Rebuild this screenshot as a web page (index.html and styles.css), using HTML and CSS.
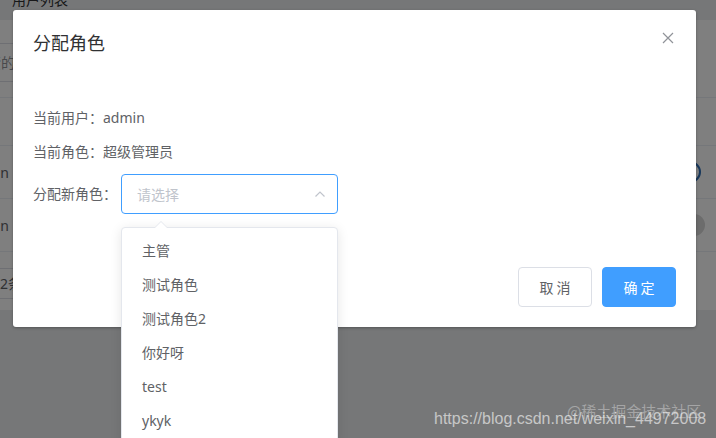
FILE: index.html
```html
<!DOCTYPE html>
<html lang="zh-CN">
<head>
<meta charset="utf-8">
<title>分配角色</title>
<link rel="stylesheet" href="styles.css">
</head>
<body>
<div class="page">
  <div class="crumb">用户列表</div>
  <div class="card">
    <div class="search"><span>输入搜索的内容</span></div>
    <div class="table">
      <div class="trow thead"></div>
      <div class="trow"><span class="cell-left">admin</span><span class="ring"></span></div>
      <div class="trow"><span class="cell-left">admin</span><span class="dot"></span></div>
    </div>
    <div class="pager"><span class="sizes">2条/页</span></div>
  </div>
</div>

<div class="mask"></div>

<div class="dialog">
  <div class="dlg-header">
    <span class="dlg-title">分配角色</span>
    <svg class="close" width="16" height="16" viewBox="0 0 16 16"><path d="M3 3 L13 13 M13 3 L3 13" stroke="#909399" stroke-width="1.2" fill="none"/></svg>
  </div>
  <div class="dlg-body">
    <p class="line">当前用户：admin</p>
    <p class="line">当前角色：超级管理员</p>
    <div class="form-row">
      <span class="label">分配新角色：</span>
      <div class="select">
        <span class="placeholder">请选择</span>
        <svg class="arrow" width="12" height="8" viewBox="0 0 12 8"><polyline points="1.5,6.5 6,2 10.5,6.5" stroke="#c0c4cc" stroke-width="1.2" fill="none"/></svg>
      </div>
    </div>
  </div>
  <div class="dlg-footer">
    <button class="btn">取 消</button>
    <button class="btn primary">确 定</button>
  </div>
</div>

<div class="dropdown">
  <span class="pop-arrow"></span>
  <ul class="options">
    <li>主管</li>
    <li>测试角色</li>
    <li>测试角色2</li>
    <li>你好呀</li>
    <li>test</li>
    <li>ykyk</li>
  </ul>
</div>

<div class="wm wm-url">https://blog.csdn.net/weixin_44972008</div>
<div class="wm wm-juejin">@稀土掘金技术社区</div>
</body>
</html>
```
FILE: styles.css
```css
* { box-sizing: border-box; }
html, body {
  margin: 0;
  padding: 0;
}
body {
  width: 716px;
  height: 438px;
  overflow: hidden;
  position: relative;
  background: #eceef1;
  font-family: "Noto Sans", "Noto Sans CJK SC", sans-serif;
  font-size: 14px;
  color: #606266;
}

/* background page */
.page {
  display: flex;
  flex-direction: column;
  overflow: hidden;
  width: 716px;
}
.crumb {
  height: 27px;
  padding-left: 12px;
  line-height: 14px;
  margin-top: -7px;
  color: #303133;
}
.card {
  background: #fff;
  margin-left: -71px;
  width: 787px;
  height: 290px;
  padding-top: 23px;
  display: flex;
  flex-direction: column;
}
.search {
  width: 180px;
  height: 39px;
  border: 1px solid #dcdfe6;
  border-radius: 4px;
  padding-left: 15px;
  line-height: 37px;
  color: #909399;
}
.table {
  margin-top: 15px;
  display: flex;
  flex-direction: column;
  border-top: 1px solid #ebeef5;
}
.trow {
  height: 53px;
  border-bottom: 1px solid #ebeef5;
  display: flex;
  align-items: center;
  justify-content: space-between;
}
.thead { height: 48px; }
.cell-left {
  width: 80px;
  text-align: right;
}
.ring {
  width: 22px;
  height: 22px;
  border-radius: 50%;
  border: 2px solid #2d6db4;
  margin-right: 15px;
}
.dot {
  width: 22px;
  height: 22px;
  border-radius: 50%;
  background: #d8d8d8;
  margin-right: 11px;
}
.pager {
  margin-top: 16px;
  display: flex;
}
.sizes {
  margin-left: 60px;
  height: 31px;
  line-height: 29px;
  padding: 0 10px;
  border: 1px solid #dcdfe6;
  border-radius: 3px;
}

/* overlay */
.mask {
  position: absolute;
  inset: 0;
  background: rgba(0, 0, 0, 0.5);
}

/* dialog */
.dialog {
  position: absolute;
  left: 13px;
  top: 10px;
  width: 683px;
  background: #fff;
  border-radius: 3px;
  box-shadow: 0 1px 3px rgba(0, 0, 0, 0.3);
  display: flex;
  flex-direction: column;
}
.dlg-header {
  padding: 20px 20px 10px;
  display: flex;
  justify-content: space-between;
  align-items: flex-start;
}
.dlg-title {
  font-size: 18px;
  line-height: 24px;
  color: #303133;
  font-family: "Noto Sans CJK SC", sans-serif;
}
.dlg-body {
  padding: 30px 20px;
}
.line {
  margin: 14px 0 0;
  line-height: 20px;
}
.form-row {
  margin: 12px 0 13px;
  display: flex;
  align-items: center;
}
.label {
  width: 88px;
  line-height: 20px;
}
.select {
  width: 217px;
  height: 40px;
  border: 1px solid #409eff;
  border-radius: 4px;
  display: flex;
  align-items: center;
  justify-content: space-between;
  padding: 0 11px 0 15px;
}
.placeholder {
  color: #c0c4cc;
  font-family: "Noto Sans CJK SC", sans-serif;
}
.dlg-footer {
  padding: 10px 20px 20px;
  display: flex;
  justify-content: flex-end;
  gap: 10px;
}
.btn {
  width: 74px;
  height: 40px;
  border: 1px solid #dcdfe6;
  border-radius: 4px;
  background: #fff;
  color: #606266;
  font-size: 14px;
  font-family: "Noto Sans CJK SC", sans-serif;
  padding: 0;
}
.btn.primary {
  background: #409eff;
  border-color: #409eff;
  color: #fff;
}

/* dropdown popper */
.dropdown {
  position: absolute;
  left: 121px;
  top: 227px;
  width: 217px;
  background: #fff;
  border: 1px solid #e4e7ed;
  border-radius: 4px;
  box-shadow: 0 2px 12px rgba(0, 0, 0, 0.1);
}
.pop-arrow {
  position: absolute;
  left: 33px;
  top: -6px;
  width: 0;
  height: 0;
  border-left: 6px solid transparent;
  border-right: 6px solid transparent;
  border-bottom: 6px solid #fff;
  filter: drop-shadow(0 -1px 0 #e4e7ed);
}
.options {
  list-style: none;
  margin: 0;
  padding: 6px 0;
}
.options li {
  height: 34px;
  line-height: 34px;
  padding: 0 20px;
  color: #606266;
}

/* watermark */
.wm {
  position: absolute;
  white-space: nowrap;
}
.wm-url {
  left: 434px;
  top: 410px;
  font-family: "Liberation Sans", Arial, sans-serif;
  font-size: 16px;
  line-height: 18px;
  color: rgba(255, 255, 255, 0.6);
}
.wm-juejin {
  left: 567px;
  top: 401px;
  font-family: "Noto Sans CJK SC", sans-serif;
  font-size: 15px;
  line-height: 20px;
  color: rgba(255, 255, 255, 0.35);
}
```
